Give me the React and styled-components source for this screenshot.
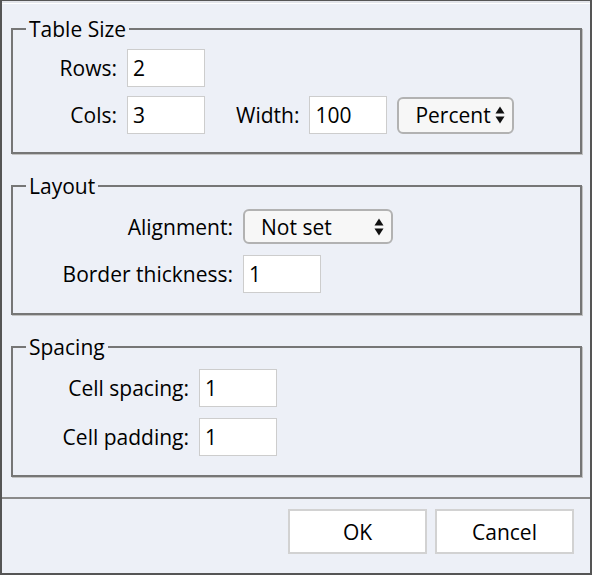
import React from 'react';
import styled, {createGlobalStyle} from 'styled-components';

const GlobalStyle = createGlobalStyle`
  body {
    margin: 0;
    padding: 0;
    overflow: hidden;
  }
  * {
    box-sizing: border-box;
  }
`
const Dialog = styled.div`
  width: 592px;
  height: 575px;
  background: #edf0f7;
  border: 2px solid #555;
  border-top: 1px solid #555;
  box-shadow: inset 0 2px 0 #e2e4ea, inset 0 3px 0 #fff;
  padding-top: 16px;
  display: flex;
  flex-direction: column;
  font-family: "Open Sans", "Liberation Sans", sans-serif;
  font-size: 21px;
  color: #000;
`
const Group = styled.fieldset`
  margin: 0 8px ${p => p.$gapBelow}px 9px;
  padding: ${p => p.$padTop}px 0 ${p => p.$padBottom}px 0;
  border: 2px solid #767676;
  box-shadow: 1px 1px 0 #c2c2c2;
  display: flex;
  flex-direction: column;
  gap: ${p => p.$rowGap}px;
  min-width: 0;
`
const Legend = styled.legend`
  margin-left: 13px;
  padding: 0 3px;
  line-height: 24px;
`
const Row = styled.div`
  display: flex;
  align-items: center;
  gap: 10px;
`
const Label = styled.label`
  width: ${p => p.$width ? `${p.$width}px` : 'auto'};
  margin-left: ${p => p.$offset || 0}px;
  text-align: right;
  white-space: nowrap;
  line-height: 24px;
`
const Field = styled.div`
  width: 78px;
  height: 38px;
  background: #fff;
  border: 1px solid #cdcdcd;
  padding-left: 5px;
  display: flex;
  align-items: center;
`
const Select = styled.div`
  width: ${p => p.$width}px;
  height: ${p => p.$height}px;
  background: #f7f7f7;
  border: 2px solid #b2b2b2;
  border-radius: 6px;
  padding: 0 7px 0 16px;
  display: flex;
  align-items: center;
  justify-content: space-between;
`
const Separator = styled.div`
  margin-top: 20px;
  height: 2px;
  background: #8a8a8a;
`
const Footer = styled.div`
  display: flex;
  justify-content: flex-end;
  gap: 8px;
  padding: 10px 16px 0 0;
`
const Button = styled.div`
  width: 139px;
  height: 45px;
  background: #fff;
  border: 2px solid #d2d2d2;
  display: flex;
  align-items: center;
  justify-content: center;
`

function Arrows() {
  return (
    <svg width="10" height="18" viewBox="0 0 10 18">
      <path d="M5 0.5 L9.5 7.5 L0.5 7.5 Z" fill="#111"/>
      <path d="M0.5 10.5 L9.5 10.5 L5 17.5 Z" fill="#111"/>
    </svg>
  );
}

function App() {
  return (
    <Dialog>
      <GlobalStyle/>
      <Group $padTop={8} $padBottom={18} $rowGap={9} $gapBelow={20}>
        <Legend>Table Size</Legend>
        <Row>
          <Label $width={104}>Rows:</Label>
          <Field>2</Field>
        </Row>
        <Row>
          <Label $width={104}>Cols:</Label>
          <Field>3</Field>
          <Label $offset={21}>Width:</Label>
          <Field>100</Field>
          <Select $width={117} $height={37}>
            <span>Percent</span>
            <Arrows/>
          </Select>
        </Row>
      </Group>
      <Group $padTop={11} $padBottom={20} $rowGap={11} $gapBelow={20}>
        <Legend>Layout</Legend>
        <Row>
          <Label $width={220}>Alignment:</Label>
          <Select $width={150} $height={35}>
            <span>Not set</span>
            <Arrows/>
          </Select>
        </Row>
        <Row>
          <Label $width={220}>Border thickness:</Label>
          <Field>1</Field>
        </Row>
      </Group>
      <Group $padTop={10} $padBottom={19} $rowGap={11} $gapBelow={0}>
        <Legend>Spacing</Legend>
        <Row>
          <Label $width={176}>Cell spacing:</Label>
          <Field>1</Field>
        </Row>
        <Row>
          <Label $width={176}>Cell padding:</Label>
          <Field>1</Field>
        </Row>
      </Group>
      <Separator/>
      <Footer>
        <Button>OK</Button>
        <Button>Cancel</Button>
      </Footer>
    </Dialog>
  );
}

export default App;
